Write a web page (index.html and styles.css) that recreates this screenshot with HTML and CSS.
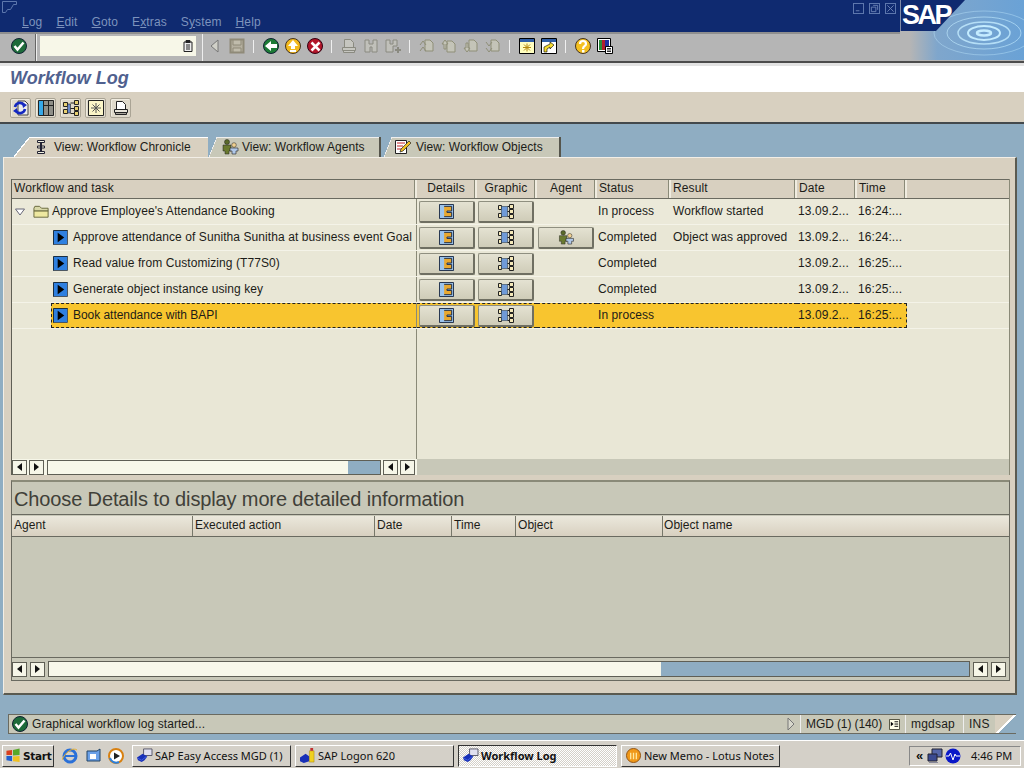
FILE: index.html
```html
<!DOCTYPE html>
<html lang="en">
<head>
<meta charset="utf-8">
<title>Workflow Log</title>
<link rel="stylesheet" href="styles.css">
</head>
<body>
<svg class="defs" width="0" height="0" aria-hidden="true">
  <defs>
    <symbol id="ok" viewBox="0 0 16 16"><circle cx="8" cy="8" r="7.5" fill="#1d6b3a" stroke="#123"/><path d="M3.5 8l3 3.5L12.5 4.500" fill="none" stroke="#fff" stroke-width="2.500"/></symbol>
    <symbol id="back" viewBox="0 0 16 16"><circle cx="8" cy="8" r="7.500" fill="#1c7a35" stroke="#123"/><path d="M2 8l6-5v3h6v4H8v3z" fill="#fff"/></symbol>
    <symbol id="up" viewBox="0 0 16 16"><circle cx="8" cy="8" r="7.500" fill="#f2b91d" stroke="#432"/><path d="M8 2l5 6h-3v3H6V8H3zM5 12h6v2H5z" fill="#fff"/></symbol>
    <symbol id="cancel" viewBox="0 0 16 16"><circle cx="8" cy="8" r="7.500" fill="#b3162a" stroke="#301"/><path d="M4.500 4.500l8 8M12.500 4.500l-8 8" stroke="#fff" stroke-width="2.500"/></symbol>
    <symbol id="tri-left" viewBox="0 0 16 16"><path d="M11 2v12L4 8z" fill="#d0d0c8" stroke="#777"/></symbol>
    <symbol id="save" viewBox="0 0 16 16"><path d="M1.500 1.500h13v13h-13z" fill="#b5b0a0" stroke="#8f8a78" stroke-width="2"/><path d="M4 2h8v5H4zM4 10h8v4H4z" fill="#c0bcac" stroke="#8f8a78"/></symbol>
    <symbol id="print" viewBox="0 0 16 16"><path d="M3.500 1.500h6l3 3v5h-9zM1.500 9.500h13v3h-13zM2.500 12.500h11v2h-11z" fill="#c6c6c0" stroke="#8a8a80"/></symbol>
    <symbol id="printb" viewBox="0 0 16 16"><path d="M3.500 1.500h6l3 3v5h-9z" fill="#fff" stroke="#222"/><path d="M1.500 9.500h13v3h-13z" fill="#e8e4d8" stroke="#222"/><path d="M2.500 12.500h11v2h-11z" fill="#a8a49a" stroke="#222"/></symbol>
    <symbol id="find" viewBox="0 0 16 16"><path d="M2 2h4v4h4V2h4v12h-5V9H7v5H2z" fill="#c0c0ba" stroke="#8a8a80"/></symbol>
    <symbol id="findp" viewBox="0 0 16 16"><path d="M1 2h4v4h3V2h4v6h-4v6H1z" fill="#c0c0ba" stroke="#8a8a80"/><path d="M10 12h6M13 9v6" stroke="#8a8a80" stroke-width="2"/></symbol>
    <symbol id="pg1" viewBox="0 0 16 16"><path d="M6 2h5l3 3v8H6z" fill="#c4c4b8" stroke="#8f8f78"/><path d="M1 7l3-4 3 4M1 13l3-4 3 4" fill="none" stroke="#8f8f78"/></symbol>
    <symbol id="pg2" viewBox="0 0 16 16"><path d="M6 3h5l3 3v8H6z" fill="#c4c4b8" stroke="#8f8f78"/><path d="M1 6l3-4 3 4H5v5H3V6z" fill="#c4c4b8" stroke="#8f8f78"/></symbol>
    <symbol id="pg3" viewBox="0 0 16 16"><path d="M6 2h5l3 3v8H6z" fill="#c4c4b8" stroke="#8f8f78"/><path d="M1 10l3 4 3-4H5V5H3v5z" fill="#c4c4b8" stroke="#8f8f78"/></symbol>
    <symbol id="pg4" viewBox="0 0 16 16"><path d="M6 2h5l3 3v8H6z" fill="#c4c4b8" stroke="#8f8f78"/><path d="M1 4l3 4 3-4M1 10l3 4 3-4" fill="none" stroke="#8f8f78"/></symbol>
    <symbol id="newsess" viewBox="0 0 16 16"><path d="M.5.500h15v15H.5z" fill="#ffffc0" stroke="#000"/><path d="M1 1h14v3H1z" fill="#2f5fa8"/><path d="M8 5.500v8M4 9.500h8M5 6.500l6 6M11 6.500l-6 6" stroke="#b58a10"/></symbol>
    <symbol id="shortcut" viewBox="0 0 16 16"><path d="M.5.500h15v15H.5z" fill="#fff" stroke="#000"/><path d="M1 1h14v3H1z" fill="#2f5fa8"/><path d="M3 14V9l6-3V4l4 3-4 4V9l-3 2v3z" fill="#f5dc30" stroke="#000" stroke-width=".6"/></symbol>
    <symbol id="help" viewBox="0 0 16 16"><circle cx="8" cy="8" r="7.500" fill="#f4c020" stroke="#432"/><path d="M5 6c0-4 6-4 6 0 0 2-3 2-3 5" fill="none" stroke="#fff" stroke-width="2.200"/><path d="M7 12h2.500v2.500H7z" fill="#fff"/></symbol>
    <symbol id="layout" viewBox="0 0 16 16"><path d="M.5.500h13v13H.5z" fill="#fff" stroke="#000"/><path d="M2 2h3v10H2z" fill="#2a8a3a"/><path d="M5 2h3v10H5z" fill="#b02030"/><path d="M8 2h4v10H8z" fill="#2030a0"/><path d="M8.500 8.500h7v7h-7z" fill="#fff" stroke="#000"/><path d="M10 10.500h4M10 12h4M10 13.500h4" stroke="#000" stroke-width=".8"/></symbol>
    <symbol id="refresh" viewBox="0 0 16 16"><path d="M5 1h7l3 3v11H5z" fill="#ededed" stroke="#444"/><path d="M2 7a5 5 0 0 1 9-2" fill="none" stroke="#1428c0" stroke-width="2.600"/><path d="M12 9a5 5 0 0 1-9 2" fill="none" stroke="#1428c0" stroke-width="2.600"/><path d="M9 2l5 3-4 3zM5 14l-5-3 4-3z" fill="#1428c0"/></symbol>
    <symbol id="columns" viewBox="0 0 16 16"><path d="M.5.500h15v15H.5z" fill="#8f8f88" stroke="#222"/><path d="M1 1h4v14H1z" fill="#36a8e8"/><path d="M5.500 0v16M10.500 0v16M5 5.500h11" stroke="#222"/></symbol>
    <symbol id="graph" viewBox="0 0 16 16"><path d="M.5 2.500h4v4h-4zM.5 9.500h4v4h-4zM11.500.500h4v4h-4zM11.500 6.500h4v4h-4zM11.500 11.500h4v4h-4z" fill="#e8d070" stroke="#222"/><path d="M4.500 4h3v9h-3z" fill="#6888c8" stroke="#222" stroke-width=".6"/><path d="M7.500 3h4M7.500 8.500h4M7.500 13.500h4" stroke="#222"/></symbol>
    <symbol id="graphb" viewBox="0 0 16 15"><path d="M.5 1.500h3v4h-3zM.5 9.500h3v4h-3zM11.500.500h4v4h-4zM11.500 5.500h4v4h-4zM11.500 10.500h4v4h-4z" fill="#f4e8b8" stroke="#222"/><path d="M3.500 2.500h6v10h-6z" fill="#6f9ad8" stroke="#345" stroke-width=".6"/><path d="M9.500 2.500h2M9.500 7.500h2M9.500 12.500h2" stroke="#222"/></symbol>
    <symbol id="star" viewBox="0 0 16 16"><path d="M.5.500h15v15H.5z" fill="#fbf5c8" stroke="#222"/><path d="M8 3v10M3 8h10M4.500 4.500l7 7M11.500 4.500l-7 7" stroke="#555"/></symbol>
    <symbol id="details" viewBox="0 0 16 16"><path d="M.5.500h15v15H.5z" fill="#9cc4ec" stroke="#1a2a44"/><path d="M5.500 2.500h8v5h-5v1.500h5v4.500h-8" fill="#e8a830" stroke="#1a2a44"/></symbol>
    <symbol id="people" viewBox="0 0 18 16"><circle cx="6" cy="3" r="2.500" fill="#5a6a2a" stroke="#222" stroke-width=".5"/><path d="M2 6h8v6H8v3H4v-3H2z" fill="#6a7a30" stroke="#222" stroke-width=".5"/><circle cx="13" cy="6" r="2.300" fill="#f0d090" stroke="#222" stroke-width=".5"/><path d="M9 9h8v3h-2v3h-4v-3H9z" fill="#b0c8e8" stroke="#222" stroke-width=".6"/></symbol>
    <symbol id="chron" viewBox="0 0 12 16"><path d="M2.500 1.500h7v2h-7zM2.500 7h7v2h-7zM2.500 12.500h7v2h-7z" fill="#f0f0e0" stroke="#223"/><path d="M6 3.500v9" stroke="#223" stroke-width="2"/></symbol>
    <symbol id="pencil" viewBox="0 0 18 16"><path d="M1.500 1.500h11v13h-11z" fill="#fff" stroke="#222"/><path d="M3 4h8M3 7h6M3 10h5" stroke="#c02020"/><path d="M6 13l1-3 8-8 2 2-8 8z" fill="#f0c020" stroke="#222" stroke-width=".7"/></symbol>
    <symbol id="folder" viewBox="0 0 18 14"><path d="M1 3l1-2h5l2 2h7v3H1z" fill="#d8d8a8" stroke="#66663a"/><path d="M1 12.500V6h15v6.500z" fill="#eee8a0" stroke="#66663a"/></symbol>
    <symbol id="step" viewBox="0 0 16 16"><path d="M.5.500h15v15H.5z" fill="#2f80e0" stroke="#123"/><path d="M5 3v10l7-5z" fill="#000"/><path d="M16 1v15H1" fill="none" stroke="#888"/></symbol>
    <symbol id="sapapp" viewBox="0 0 18 16"><path d="M8 1h9v7H8z" fill="#e0e0f0" stroke="#556"/><path d="M1 10l6-4 5 3-3 4-3 2-4-2z" fill="#1830b8"/><path d="M2 11l4 2 5-4" stroke="#4060e0" fill="none"/></symbol>
    <symbol id="saplogon" viewBox="0 0 18 16"><path d="M1 10l6-4 4 3v5l-6 2-4-2z" fill="#1830b8"/><path d="M11 3h5v12h-5z" fill="#f0d020" stroke="#a08010" stroke-width=".5"/><path d="M12 0h3v3h-3z" fill="#c03030"/></symbol>
    <symbol id="sapmedia" viewBox="0 0 16 16"><circle cx="8" cy="8" r="7.500" fill="#0a18c8"/><path d="M1 8h3l1.500-3 2.500 7 2-6 1 2h4" fill="none" stroke="#fff"/></symbol>
    <symbol id="notes" viewBox="0 0 16 16"><circle cx="8" cy="8" r="7.500" fill="#f09818" stroke="#905010"/><path d="M5 5v7M8 5v7M11 5v7" stroke="#ffe8a0" stroke-width="1.400"/></symbol>
    <symbol id="ie" viewBox="0 0 16 16"><circle cx="8" cy="8" r="6" fill="none" stroke="#2a70d8" stroke-width="3"/><path d="M3 8h10" stroke="#2a70d8" stroke-width="2"/><path d="M0 12C3 4 11-1 15 2" fill="none" stroke="#e8b030"/></symbol>
    <symbol id="outlook" viewBox="0 0 16 16"><path d="M2 3h10l3-2v12H2z" fill="#6aa0e8" stroke="#246"/><path d="M5 6h6v5H5z" fill="#fff"/></symbol>
    <symbol id="wmp" viewBox="0 0 16 16"><circle cx="8" cy="8" r="7" fill="#fff" stroke="#d88010" stroke-width="2"/><path d="M6 4.500v7l6-3.500z" fill="#222"/><path d="M2 10a6.500 6.500 0 0 0 9 4" fill="none" stroke="#2a80e0" stroke-width="2"/></symbol>
    <symbol id="winlogo" viewBox="0 0 16 16"><path d="M1 3l6-1v5.500H1z" fill="#d84020"/><path d="M8 2l7-1.500v7L8 8z" fill="#58a828"/><path d="M1 8.500h6V14l-6-1z" fill="#2060d0"/><path d="M8 9l7-.5V15l-7-1z" fill="#f0c020"/></symbol>
    <symbol id="notepad" viewBox="0 0 10 12"><path d="M1 2h8v9.500H1z" fill="#eee" stroke="#222"/><path d="M3 .500h4v2H3zM3 5h4M3 7h4M3 9h4" fill="#222" stroke="#222"/></symbol>
    <symbol id="monitor" viewBox="0 0 16 16"><path d="M5 1h10v8H5z" fill="#5566a8" stroke="#223"/><path d="M1 6h9v7H1z" fill="#3a4a90" stroke="#223"/><path d="M2 14h9v1H2z" fill="#889"/></symbol>
    <symbol id="menuicon" viewBox="0 0 12 12"><path d="M.5.500h11v11H.5z" fill="#ffffe8" stroke="#443"/><path d="M2 3v5l3-2.500z" fill="#000"/><path d="M6 3h4M6 5.500h4M6 8h4" stroke="#000"/></symbol>
  </defs>
</svg>

<div class="screen">
  <header class="titlebar">
    <svg class="sys-icon" viewBox="0 0 16 12" aria-hidden="true"><path d="M.5.500h14v3h-3l-3 5h-3l-2 3H.5z" fill="none" stroke="#5d77ad"/></svg>
    <nav class="menu">
      <span class="menu-item"><u>L</u>og</span>
      <span class="menu-item"><u>E</u>dit</span>
      <span class="menu-item"><u>G</u>oto</span>
      <span class="menu-item">E<u>x</u>tras</span>
      <span class="menu-item">S<u>y</u>stem</span>
      <span class="menu-item"><u>H</u>elp</span>
    </nav>
    <div class="win-btns">
      <span class="win-btn"><svg viewBox="0 0 10 10"><path d="M2 7.500h4" stroke="#6f86b8"/></svg></span>
      <span class="win-btn"><svg viewBox="0 0 10 10"><path d="M1.500 3.500h5v5h-5zM3.500 1.500h5v5" fill="none" stroke="#6f86b8"/></svg></span>
      <span class="win-btn"><svg viewBox="0 0 10 10"><path d="M1.500 1.500l7 7M8.500 1.500l-7 7" stroke="#6f86b8"/></svg></span>
    </div>
  </header>

  <div class="sap-logo" aria-hidden="true">
    <svg class="sap-art" viewBox="0 0 124 60">
      <defs>
        <linearGradient id="fade" x1="0" x2="1" y1="0" y2="0"><stop offset=".08" stop-color="#b5b5b5"/><stop offset=".3" stop-color="#7fa6cc"/><stop offset="1" stop-color="#6aa2d6"/></linearGradient>
        <filter id="soft"><feGaussianBlur stdDeviation=".7"/></filter>
      </defs>
      <path d="M0 0h124v60H0z" fill="url(#fade)"/>
      <g fill="none" stroke="#c4ecff" filter="url(#soft)">
        <ellipse cx="84" cy="33" rx="7" ry="2.500" stroke-width="2.500"/><ellipse cx="84" cy="33" rx="16" ry="7" stroke-width="2"/><ellipse cx="84" cy="33" rx="26" ry="11" stroke-width="1.500" stroke-opacity=".8"/><ellipse cx="84" cy="33" rx="37" ry="16" stroke-opacity=".6"/><ellipse cx="84" cy="33" rx="50" ry="22" stroke-opacity=".4"/>
      </g>
      <path d="M0 0h65L36 31H0z" fill="#0f2a70"/>
      <path d="M.5 0v31" stroke="#7f8aa8"/>
    </svg>
    <span class="sap-word">SAP</span>
  </div>

  <div class="toolbar">
    <span class="tool ok-slot"><svg class="ic16"><use href="#ok"/></svg></span>
    <span class="cmd-sep"></span>
    <span class="cmd-field"><svg class="ic-note"><use href="#notepad"/></svg></span>
    <span class="cmd-sep light"></span>
    <span class="tool"><svg class="ic16"><use href="#tri-left"/></svg></span>
    <span class="tool"><svg class="ic16"><use href="#save"/></svg></span>
    <span class="sep"></span>
    <span class="tool"><svg class="ic16"><use href="#back"/></svg></span>
    <span class="tool"><svg class="ic16"><use href="#up"/></svg></span>
    <span class="tool"><svg class="ic16"><use href="#cancel"/></svg></span>
    <span class="sep"></span>
    <span class="tool"><svg class="ic16"><use href="#print"/></svg></span>
    <span class="tool"><svg class="ic16"><use href="#find"/></svg></span>
    <span class="tool"><svg class="ic16"><use href="#findp"/></svg></span>
    <span class="sep"></span>
    <span class="tool"><svg class="ic16"><use href="#pg1"/></svg></span>
    <span class="tool"><svg class="ic16"><use href="#pg2"/></svg></span>
    <span class="tool"><svg class="ic16"><use href="#pg3"/></svg></span>
    <span class="tool"><svg class="ic16"><use href="#pg4"/></svg></span>
    <span class="sep"></span>
    <span class="tool"><svg class="ic16"><use href="#newsess"/></svg></span>
    <span class="tool"><svg class="ic16"><use href="#shortcut"/></svg></span>
    <span class="sep"></span>
    <span class="tool"><svg class="ic16"><use href="#help"/></svg></span>
    <span class="tool"><svg class="ic16"><use href="#layout"/></svg></span>
  </div>

  <div class="title-band"><h1 class="page-title">Workflow Log</h1></div>

  <div class="app-toolbar">
    <span class="app-btn"><svg class="ic16"><use href="#refresh"/></svg></span>
    <span class="app-btn"><svg class="ic16"><use href="#columns"/></svg></span>
    <span class="app-btn"><svg class="ic16"><use href="#graph"/></svg></span>
    <span class="app-btn"><svg class="ic16"><use href="#star"/></svg></span>
    <span class="app-btn"><svg class="ic16"><use href="#printb"/></svg></span>
  </div>

  <main class="main">
    <div class="tabs">
      <div class="tab tab-active"><svg class="ic-chron"><use href="#chron"/></svg><span>View: Workflow Chronicle</span></div>
      <div class="tab tab-inactive tab-second"><svg class="ic-tab"><use href="#people"/></svg><span>View: Workflow Agents</span></div>
      <div class="tab tab-inactive tab-third"><svg class="ic-tab"><use href="#pencil"/></svg><span>View: Workflow Objects</span></div>
    </div>

    <section class="panel">
      <div class="tree-grid">
        <div class="row head-row">
          <div class="hcell">Workflow and task</div>
          <div class="hcell center">Details</div>
          <div class="hcell center">Graphic</div>
          <div class="hcell center">Agent</div>
          <div class="hcell">Status</div>
          <div class="hcell">Result</div>
          <div class="hcell">Date</div>
          <div class="hcell">Time</div>
          <div class="hcell filler"></div>
        </div>

        <div class="row root-row">
          <div class="cell tree-cell"><div class="tree-in root-in"><svg class="twisty" viewBox="0 0 10 8"><path d="M.5 1h9L5 7z" fill="#fff" stroke="#667"/></svg><svg class="ic-folder"><use href="#folder"/></svg><span>Approve Employee's Attendance Booking</span></div></div>
          <div class="cell btn-cell"><span class="gbtn"><svg class="ic-det"><use href="#details"/></svg></span></div>
          <div class="cell btn-cell"><span class="gbtn"><svg class="ic-gr"><use href="#graphb"/></svg></span></div>
          <div class="cell btn-cell"></div>
          <div class="cell">In process</div>
          <div class="cell cell-result">Workflow started</div>
          <div class="cell">13.09.2...</div>
          <div class="cell">16:24:...</div>
          <div class="cell filler"></div>
        </div>

        <div class="row">
          <div class="cell tree-cell"><div class="tree-in step-in"><svg class="ic-step"><use href="#step"/></svg><span>Approve attendance of Sunitha Sunitha at business event Goal</span></div></div>
          <div class="cell btn-cell"><span class="gbtn"><svg class="ic-det"><use href="#details"/></svg></span></div>
          <div class="cell btn-cell"><span class="gbtn"><svg class="ic-gr"><use href="#graphb"/></svg></span></div>
          <div class="cell btn-cell"><span class="gbtn"><svg class="ic-people"><use href="#people"/></svg></span></div>
          <div class="cell">Completed</div>
          <div class="cell cell-result">Object was approved</div>
          <div class="cell">13.09.2...</div>
          <div class="cell">16:24:...</div>
          <div class="cell filler"></div>
        </div>

        <div class="row">
          <div class="cell tree-cell"><div class="tree-in step-in"><svg class="ic-step"><use href="#step"/></svg><span>Read value from Customizing (T77S0)</span></div></div>
          <div class="cell btn-cell"><span class="gbtn"><svg class="ic-det"><use href="#details"/></svg></span></div>
          <div class="cell btn-cell"><span class="gbtn"><svg class="ic-gr"><use href="#graphb"/></svg></span></div>
          <div class="cell btn-cell"></div>
          <div class="cell">Completed</div>
          <div class="cell cell-result"></div>
          <div class="cell">13.09.2...</div>
          <div class="cell">16:25:...</div>
          <div class="cell filler"></div>
        </div>

        <div class="row">
          <div class="cell tree-cell"><div class="tree-in step-in"><svg class="ic-step"><use href="#step"/></svg><span>Generate object instance using key</span></div></div>
          <div class="cell btn-cell"><span class="gbtn"><svg class="ic-det"><use href="#details"/></svg></span></div>
          <div class="cell btn-cell"><span class="gbtn"><svg class="ic-gr"><use href="#graphb"/></svg></span></div>
          <div class="cell btn-cell"></div>
          <div class="cell">Completed</div>
          <div class="cell cell-result"></div>
          <div class="cell">13.09.2...</div>
          <div class="cell">16:25:...</div>
          <div class="cell filler"></div>
        </div>

        <div class="row selected">
          <div class="cell tree-cell"><div class="tree-in step-in sel-in"><svg class="ic-step"><use href="#step"/></svg><span>Book attendance with BAPI</span></div></div>
          <div class="cell btn-cell"><span class="gbtn"><svg class="ic-det"><use href="#details"/></svg></span></div>
          <div class="cell btn-cell"><span class="gbtn"><svg class="ic-gr"><use href="#graphb"/></svg></span></div>
          <div class="cell btn-cell"></div>
          <div class="cell">In process</div>
          <div class="cell cell-result"></div>
          <div class="cell">13.09.2...</div>
          <div class="cell">16:25:...</div>
          <div class="cell filler"></div>
        </div>

        <div class="tree-empty"><div class="tree-empty-left"></div></div>

        <div class="tree-scroll">
          <div class="tree-scroll-left">
            <span class="sbtn"><span class="arr-l"></span></span>
            <span class="sbtn"><span class="arr-r"></span></span>
            <span class="strack strack-tree"><span class="sthumb"></span><span class="sblue sblue-tree"></span></span>
            <span class="sbtn"><span class="arr-l"></span></span>
            <span class="sbtn"><span class="arr-r"></span></span>
          </div>
        </div>
      </div>

      <div class="detail">
        <h2 class="detail-title">Choose Details to display more detailed information</h2>
        <div class="detail-head">
          <div class="dh dh-agent">Agent</div>
          <div class="dh dh-action">Executed action</div>
          <div class="dh dh-date">Date</div>
          <div class="dh dh-time">Time</div>
          <div class="dh dh-object">Object</div>
          <div class="dh dh-name">Object name</div>
        </div>
        <div class="detail-body"></div>
        <div class="detail-scroll">
          <span class="sbtn"><span class="arr-l"></span></span>
          <span class="sbtn"><span class="arr-r"></span></span>
          <span class="strack strack-detail"><span class="sthumb sthumb-detail"></span><span class="sblue"></span></span>
          <span class="sbtn"><span class="arr-l"></span></span>
          <span class="sbtn"><span class="arr-r"></span></span>
        </div>
      </div>
    </section>
  </main>

  <div class="statusbar">
    <div class="status-msg"><svg class="ic16"><use href="#ok"/></svg><span>Graphical workflow log started...</span></div>
    <svg class="status-tri" viewBox="0 0 8 14"><path d="M1 1l6 6-6 6z" fill="#d8d8cc" stroke="#777"/></svg>
    <div class="status-f f-sys"><span>MGD (1) (140)</span><svg class="ic-menu"><use href="#menuicon"/></svg></div>
    <div class="status-f f-host">mgdsap</div>
    <div class="status-f f-ins">INS</div>
    <div class="status-grip"></div>
  </div>

  <footer class="taskbar">
    <div class="start"><svg class="ic-win"><use href="#winlogo"/></svg><span>Start</span></div>
    <div class="quick">
      <svg class="ic-quick"><use href="#ie"/></svg>
      <svg class="ic-quick"><use href="#outlook"/></svg>
      <svg class="ic-quick"><use href="#wmp"/></svg>
    </div>
    <div class="task"><svg class="ic-task"><use href="#sapapp"/></svg><span>SAP Easy Access MGD (1)</span></div>
    <div class="task"><svg class="ic-task"><use href="#saplogon"/></svg><span>SAP Logon 620</span></div>
    <div class="task task-active"><svg class="ic-task"><use href="#sapapp"/></svg><span>Workflow Log</span></div>
    <div class="task"><svg class="ic-task"><use href="#notes"/></svg><span>New Memo - Lotus Notes</span></div>
    <div class="tray">
      <span class="tray-more">«</span>
      <svg class="ic-tray"><use href="#monitor"/></svg>
      <svg class="ic-tray"><use href="#sapmedia"/></svg>
      <span class="clock">4:46 PM</span>
    </div>
  </footer>
</div>
</body>
</html>
```

FILE: styles.css
```css
* { box-sizing: border-box; }
html, body { margin: 0; padding: 0; }
body { width: 1024px; height: 768px; overflow: hidden; font-family: "Liberation Sans", Arial, sans-serif; font-size: 12px; color: #1c1c18; }
.defs { position: absolute; }
.screen { position: relative; width: 1024px; height: 768px; display: flex; flex-direction: column; background: #8fadc2; }
svg { display: block; flex: none; }
.ic16 { width: 16px; height: 16px; }

.titlebar { height: 32px; background: #0f2a70; display: flex; padding-left: 2px; position: relative; }
.sys-icon { width: 16px; height: 12px; margin-top: 1px; }
.menu { display: flex; gap: 14px; margin: 15px 0 0 4px; color: #7d93bd; letter-spacing: .12px; }
.menu-item { line-height: 14px; }
.win-btns { position: absolute; right: 128px; top: 3px; display: flex; gap: 5px; }
.win-btn { width: 11px; height: 11px; border: 1px solid #5d77ad; display: block; }
.win-btn svg { width: 9px; height: 9px; }

.sap-logo { position: absolute; left: 900px; top: 0; width: 124px; height: 60px; z-index: 2; }
.sap-art { width: 124px; height: 60px; }
.sap-word { position: absolute; left: 2px; top: 0; color: #fff; font-size: 27px; font-weight: 700; line-height: 31px; letter-spacing: -2.500px; }

.toolbar { height: 31px; background: #b5b5b5; border-top: 2px solid #8f8f8f; border-bottom: 2px solid #4c4c4c; display: flex; align-items: center; padding-bottom: 4px; }
.tool { width: 22px; height: 16px; display: flex; justify-content: center; flex: none; }
.ok-slot { width: 35px; padding-left: 3px; }
.cmd-sep { width: 1px; height: 27px; background: #666; box-shadow: 1px 0 0 #eee; margin-top: 4px; flex: none; }
.cmd-field { width: 156px; height: 20px; background: #f7f7e8; margin: 0 6px 0 4px; display: flex; align-items: center; justify-content: flex-end; padding-right: 3px; flex: none; }
.light { background: #eee; box-shadow: none; margin-right: 1px; }
.ic-note { width: 10px; height: 12px; }
.sep { width: 12px; height: 14px; position: relative; flex: none; }
.sep::before { content: ""; position: absolute; left: 5px; top: 1px; width: 1px; height: 13px; background: #efefef; }

.title-band { height: 30px; background: #fff; border-top: 3px solid #e3e3e3; border-bottom: 1px solid #d8d0c0; padding-left: 10px; }
.page-title { margin: 0; font-size: 18px; line-height: 24px; font-weight: 700; font-style: italic; color: #50618f; }

.app-toolbar { height: 31px; background: #d8d0c0; border-bottom: 2px solid #44494c; padding: 5px 0 0 10px; display: flex; gap: 4px; }
.app-btn { width: 21px; height: 20px; border: 1px solid #aaa495; border-radius: 2px; background: #e0dacb; box-shadow: inset 1px 1px 0 #f0ece0; display: flex; align-items: center; justify-content: center; }

.main { display: flex; flex-direction: column; padding: 13px 0 0 3px; height: 571px; }
.tabs { height: 20px; display: flex; align-items: flex-end; padding-left: 11px; letter-spacing: .05px; }
.tab { display: flex; align-items: center; height: 20px; position: relative; white-space: nowrap; }
.tab-active { width: 194px; padding-left: 21px; z-index: 1; background-image: linear-gradient(to bottom right, transparent 0 47%, #fff 47% 52%, #d8d0c0 52%), linear-gradient(#fff, #fff), linear-gradient(#d8d0c0, #d8d0c0); background-position: left top, 16px 0, 16px 0; background-size: 16px 20px, 178px 1px, 178px 20px; background-repeat: no-repeat; }
.tab-inactive { background-image: linear-gradient(to bottom right, transparent 0 47%, #eee 47% 52%, #c8c8b8 52%), linear-gradient(#eee, #eee), linear-gradient(#c8c8b8, #c8c8b8); background-position: left top, 8px 0, 8px 0; background-size: 8px 20px, 100% 1px, 100% 20px; background-repeat: no-repeat; border-right: 2px solid #55554c; }
.tab-second { width: 172px; margin-left: 1px; padding-left: 12px; }
.tab-third { width: 177px; margin-left: 3px; padding-left: 10px; }
.ic-chron { width: 12px; height: 16px; margin-right: 7px; }
.ic-tab { width: 18px; height: 16px; margin-right: 3px; }
.tab-third .ic-tab { margin-right: 4px; }

.panel { width: 1014px; height: 538px; background: #d8d0c0; border-left: 1px solid #f2eee6; border-top: 1px solid #f2eee6; border-right: 2px solid #5a5a50; border-bottom: 2px solid #5a5a50; padding: 21px 0 0 7px; }

.tree-grid { width: 999px; border-left: 1px solid #5f5f55; border-right: 1px solid #8a8a78; }
.row { display: grid; grid-template-columns: 405px 60px 60px 60px 74px 126px 60px 50px 1fr; height: 26px; background: #e9e7d6; border-bottom: 1px solid #f4f3e8; }
.head-row { height: 20px; border: 0; background: #d8d0c0; border-top: 1px solid #6a6a60; border-bottom: 1px solid #6a6a60; }
.hcell { padding: 0 2px; line-height: 17px; border-right: 2px solid #f0ece0; box-shadow: inset -1px 0 0 #8a8a78; letter-spacing: .12px; }
.hcell.filler { border: 0; box-shadow: none; }
.center { text-align: center; }
.cell { line-height: 25px; padding-left: 1px; white-space: nowrap; overflow: hidden; letter-spacing: .08px; }
.cell-result { padding-left: 2px; }
.root-row { background: #ebe9d9; }
.tree-cell { padding: 0; border-right: 1px solid #8a8a78; overflow: visible; }
.tree-in { display: flex; align-items: center; height: 25px; }
.root-in { padding-left: 3px; }
.twisty { width: 10px; height: 8px; margin-right: 8px; }
.ic-folder { width: 17px; height: 14px; margin-right: 2px; }
.step-in { padding-left: 41px; }
.ic-step { width: 15px; height: 15px; margin-right: 5px; }
.btn-cell { padding: 2px 0 0 2px; overflow: visible; }
.btn-cell + .btn-cell { padding-left: 1px; }
.gbtn { width: 56px; height: 22px; display: flex; align-items: center; justify-content: center; background: linear-gradient(#e4e2d2, #cfccb8); border: 1px solid #8f8f80; border-right: 2px solid #6f6f62; border-bottom: 2px solid #6f6f62; border-radius: 2px; }
.ic-det { width: 15px; height: 15px; }
.ic-gr { width: 16px; height: 15px; }
.ic-people { width: 18px; height: 15px; }
.selected .cell:not(.filler):not(.tree-cell) { background: #f8c52f; border-top: 1px dashed #222; border-bottom: 1px dashed #222; line-height: 23px; }
.selected .btn-cell { padding-top: 1px; }
.sel-in { margin-left: 39px; padding-left: 1px; background: #f8c52f; border: 1px dashed #222; border-right: 0; letter-spacing: -.04px; }
.selected .cell:nth-child(8) { border-right: 1px dashed #222; }

.tree-empty { height: 130px; background: #e9e7d6; }
.tree-empty-left { width: 405px; height: 100%; border-right: 1px solid #8a8a78; }
.tree-scroll { height: 16px; background: #c8c8b8; }
.tree-scroll-left { width: 405px; height: 16px; background: #f6f6e8; display: flex; align-items: center; gap: 2px; }
.sbtn { width: 15px; height: 15px; flex: none; background: #f6f6e8; border: 1px solid #5f5f55; display: flex; align-items: center; justify-content: center; }
.arr-l { width: 0; height: 0; border-top: 4px solid transparent; border-bottom: 4px solid transparent; border-right: 5px solid #111; }
.arr-r { width: 0; height: 0; border-top: 4px solid transparent; border-bottom: 4px solid transparent; border-left: 5px solid #111; }
.strack { height: 15px; display: flex; border: 1px solid #5f5f55; background: #fff; flex: none; }
.strack-tree { width: 334px; margin-left: 1px; }
.sthumb { flex: 1; background: #f8f8ea; }
.sblue { flex: 1; background: #8fadc2; }
.sblue-tree { flex: none; width: 32px; }

.detail { width: 999px; margin-top: 5px; background: #c8c8b8; border: 1px solid #6a6a60; border-top: 2px solid #8a8a78; }
.detail-title { margin: 0; height: 33px; border-bottom: 1px solid #6a6a60; font-size: 20px; font-weight: 400; line-height: 35px; color: #404038; padding-left: 2px; letter-spacing: -.13px; }
.detail-head { display: flex; height: 21px; margin-top: 1px; background: linear-gradient(#ebe8dc, #d8d0c0); border-bottom: 1px solid #6a6a60; }
.dh { line-height: 18px; padding-left: 2px; border-right: 1px solid #77776a; letter-spacing: .05px; }
.dh-agent { width: 181px; }
.dh-action { width: 182px; }
.dh-date { width: 77px; }
.dh-time { width: 64px; }
.dh-object { width: 147px; }
.dh-name { flex: 1; border: 0; padding-left: 1px; }
.detail-body { height: 121px; border-bottom: 1px solid #6a6a60; }
.detail-scroll { height: 22px; display: flex; align-items: center; gap: 3px; }
.strack-detail { width: 922px; height: 16px; }
.sthumb-detail { flex: none; width: 612px; }

.statusbar { height: 20px; margin: 19px 0 0 8px; width: 1008px; display: flex; align-items: center; background: #c8c8b8; border: 1px solid #6a6a60; border-right: 0; flex: none; }
.status-msg { display: flex; align-items: center; gap: 4px; width: 776px; padding-left: 3px; letter-spacing: .07px; }
.status-tri { width: 8px; height: 14px; margin: 0 5px 0 2px; }
.status-f { height: 18px; display: flex; align-items: center; border-left: 1px solid #eee; padding-left: 5px; letter-spacing: .2px; white-space: nowrap; flex: none; }
.f-sys { width: 105px; gap: 7px; letter-spacing: -.1px; }
.f-host { width: 58px; }
.f-ins { width: 32px; }
.ic-menu { width: 11px; height: 11px; }
.status-grip { flex: 1; height: 18px; background: linear-gradient(135deg, #d8d0c0 0 48%, #fff 48% 54%, #8fadc2 54%); }

.taskbar { margin-top: auto; height: 28px; background: #d4d0c8; border-top: 1px solid #fff; display: flex; align-items: center; padding: 2px 2px 0; color: #111; flex: none; }
.start { width: 52px; height: 22px; display: flex; align-items: center; gap: 2px; padding-left: 2px; border: 1px solid #fff; border-right: 1px solid #333; border-bottom: 1px solid #333; font-family: "DejaVu Sans", sans-serif; font-weight: 700; font-size: 10.500px; letter-spacing: -.3px; flex: none; }
.ic-win { width: 16px; height: 15px; }
.quick { display: flex; gap: 7px; margin-left: 8px; width: 70px; flex: none; }
.ic-quick { width: 16px; height: 16px; }
.task { width: 159px; height: 22px; display: flex; align-items: center; gap: 2px; padding-left: 3px; border: 1px solid #fff; border-right: 1px solid #333; border-bottom: 1px solid #333; font-size: 11px; font-family: "Noto Sans", sans-serif; margin-right: 4px; white-space: nowrap; flex: none; }
.ic-task { width: 17px; height: 15px; }
.task-active { border-color: #333 #fff #fff #333; font-weight: 700; background: repeating-conic-gradient(#fff 0 25%, #d4d0c8 0 50%) 0 0 / 2px 2px; }
.tray { width: 112px; height: 20px; margin-left: auto; margin-right: 1px; border: 1px solid #fff; border-left-color: #888; border-top-color: #888; display: flex; align-items: center; padding-left: 6px; gap: 2px; white-space: nowrap; }
.tray-more { font-weight: 700; width: 9px; font-size: 13px; }
.ic-tray { width: 16px; height: 16px; }
.clock { margin-left: 8px; font-family: "Noto Sans", sans-serif; font-size: 11px; }
```
